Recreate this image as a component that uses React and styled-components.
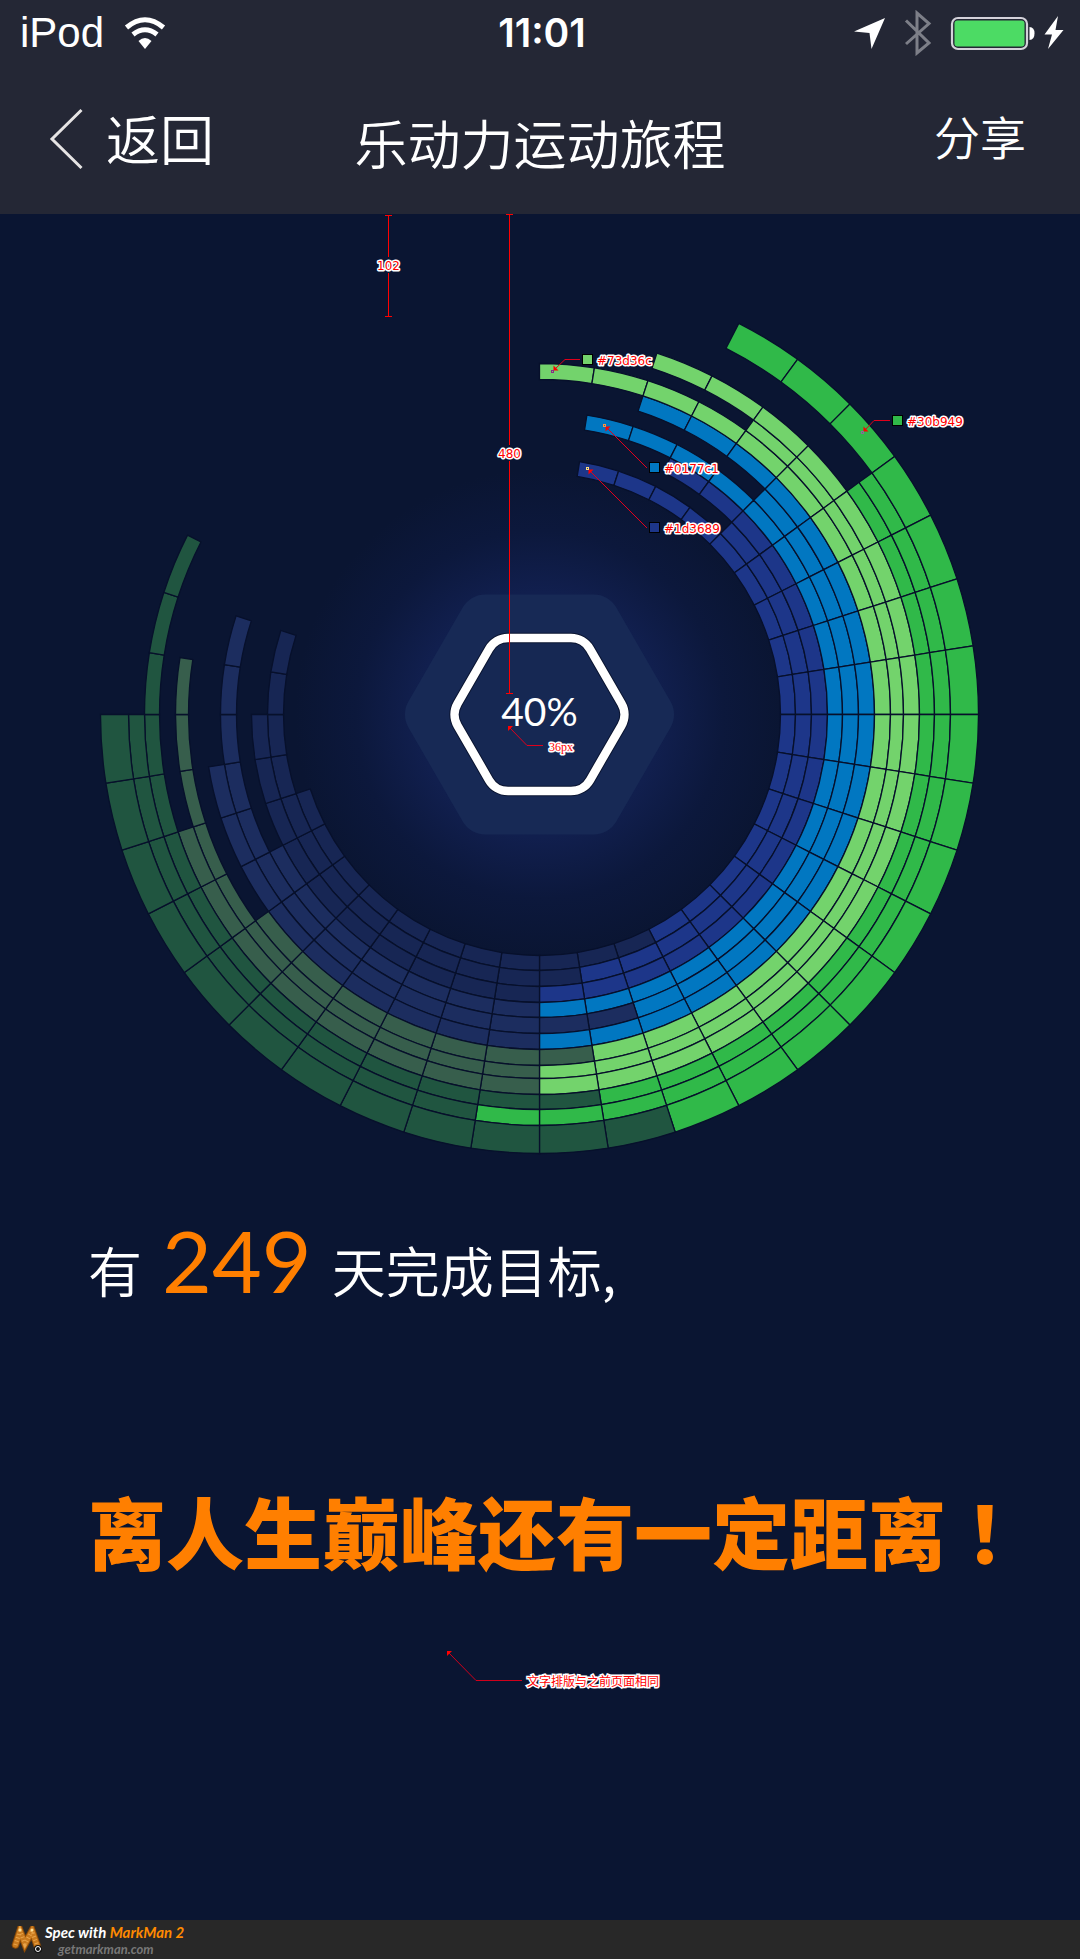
import React from "react";
import styled, { createGlobalStyle } from "styled-components";

const CJK = '"Noto Sans CJK SC", sans-serif';

const GlobalStyle = createGlobalStyle`
  *, *::before, *::after { box-sizing: border-box; }
  body {
    margin: 0;
    background: #0a1532;
    color: #fff;
    font-family: "Liberation Sans", ${CJK};
  }
`;

const Page = styled.div`
  display: flex;
  flex-direction: column;
  min-height: 100vh;
`;

const Header = styled.header`
  background: #242735;
`;

const StatusBar = styled.div`
  display: grid;
  grid-template-columns: 1fr auto 1fr;
  align-items: center;
  height: 64px;
  padding: 2px 16px 0 20px;
`;

const StatusGroup = styled.div`
  display: flex;
  align-items: center;
  justify-content: ${(p) => (p.$end ? "flex-end" : "flex-start")};
  gap: 20px;
`;

const Device = styled.span`
  font-size: 42px;
  line-height: 48px;
`;

const Clock = styled.time`
  font: 600 39px/48px Inter, sans-serif;
`;

const NavBar = styled.nav`
  display: grid;
  grid-template-columns: 1fr auto 1fr;
  align-items: center;
  height: 150px;
  padding: 0 54px 2px;
`;

const NavButton = styled.button`
  display: flex;
  align-items: center;
  gap: 20px;
  justify-self: ${(p) => (p.$end ? "end" : "start")};
  padding: 0 0 ${(p) => (p.$end ? 6 : 0)}px;
  border: 0;
  background: none;
  color: #fff;
  font: 350 ${(p) => (p.$end ? 46 : 54)}px/72px ${CJK};
  cursor: pointer;

  svg {
    overflow: visible;
  }
`;

const Title = styled.h1`
  margin: 0;
  padding-top: 8px;
  font: 350 53px/72px ${CJK};
`;

const Main = styled.main`
  flex: 1;
`;

const Chart = styled.svg`
  display: block;
  width: 100%;
  height: auto;
`;

const Percent = styled.text`
  fill: #fff;
  font: 400 39px Lato, sans-serif;
`;

const Note = styled.text`
  fill: #f00;
  stroke: #fff;
  stroke-width: 3px;
  stroke-linejoin: round;
  paint-order: stroke;
  font: 12px ${(p) => (p.$serif ? '"Liberation Serif", serif' : '"DejaVu Sans", sans-serif')};
`;

const Summary = styled.section`
  padding: 6px 72px 0 88px;
`;

const Goal = styled.p`
  display: flex;
  align-items: baseline;
  gap: 20px;
  margin: 0;
  font: 350 54px/120px ${CJK};
`;

const Days = styled.strong`
  color: #ff7f00;
  font: 400 86px/120px Lato, sans-serif;
`;

const Verdict = styled.h2`
  margin: 140px 0 0;
  color: #ff7f00;
  font: 900 78px/120px ${CJK};
  white-space: nowrap;
`;

// The Traditional Chinese face centres full-width punctuation in its box.
const Exclamation = styled.span`
  font-family: "Noto Sans CJK TC", ${CJK};
`;

const Remark = styled.p`
  display: flex;
  align-items: flex-end;
  gap: 4px;
  margin: 60px 0 0 358px;
  color: #f00;
  font: 12px/16px ${CJK};
  paint-order: stroke;
  -webkit-text-stroke: 3px #fff;
`;

const Footer = styled.footer`
  display: flex;
  align-items: center;
  gap: 2px;
  height: 39px;
  padding-left: 11px;
  background: #282828;
`;

const Credit = styled.a`
  display: block;
  color: #fff;
  font: italic 700 15px/18px Lato, sans-serif;
  text-decoration: none;
`;

const Product = styled.span`
  color: #ff8a00;
`;

const Site = styled.span`
  display: block;
  padding-left: 13px;
  color: #777;
  font-size: 13px;
  line-height: 16px;
`;

const CX = 539.5;
const CY = 500.5;
const RADII = [241, 256, 272, 288, 303, 319, 335, 351, 364, 380, 395, 411, 439];
const LIT = ["#1d3689", "#0177c1", "#73d36c", "#30b949"];
const DIM = ["#172654", "#1c2d5f", "#375e4c", "#205540"];

// One entry per ring, inside out: first lit step, last lit step, last dimmed step.
const RINGS = [
  [1, 17, 28], [5, 19, 32], [3, 20, 30],
  [1, 20, 27], [5, 18, 32], [2, 20, 29],
  [0, 19, 26], [4, 20, 31], [2, 20, 28],
  [6, 19, 33], [6, 21, 30], [3, 18, 30],
];

const point = (r, step) => {
  const a = (step * 9 * Math.PI) / 180;
  return `${(CX + r * Math.sin(a)).toFixed(2)},${(CY - r * Math.cos(a)).toFixed(2)}`;
};

const cell = (inner, outer, step) =>
  `M${point(inner, step)} L${point(outer, step)} A${outer},${outer} 0 0 1 ${point(outer, step + 1)} ` +
  `L${point(inner, step + 1)} A${inner},${inner} 0 0 0 ${point(inner, step)}Z`;

const hexagon = (apothem, radius) => {
  const cut = radius / Math.sqrt(3);
  const R = (apothem * 2) / Math.sqrt(3);
  const vertex = (i) => [
    CX + R * Math.cos((i * Math.PI) / 3),
    CY + R * Math.sin((i * Math.PI) / 3),
  ];
  let d = "";
  for (let i = 0; i < 6; i += 1) {
    const v = vertex(i);
    const toward = (w) => [
      v[0] + ((w[0] - v[0]) * cut) / R,
      v[1] + ((w[1] - v[1]) * cut) / R,
    ];
    const a = toward(vertex(i - 1));
    const b = toward(vertex(i + 1));
    d += `${i ? "L" : "M"}${a} A${radius},${radius} 0 0 1 ${b} `;
  }
  return `${d}Z`;
};

function Rings() {
  return (
    <g stroke="#07102b" strokeWidth="1.3">
      {RINGS.map(([from, lit, end], ring) =>
        Array.from({ length: end - from }, (_, i) => from + i).map((step) => (
          <path
            key={`${ring}-${step}`}
            d={cell(RADII[ring], RADII[ring + 1], step)}
            fill={(step < lit ? LIT : DIM)[Math.floor(ring / 3)]}
          />
        ))
      )}
    </g>
  );
}

function Measure({ x, top, bottom, gap, label }) {
  return (
    <g>
      <path
        d={`M${x - 3.5},${top}h7M${x},${top}V${gap}M${x},${gap + 16}V${bottom}M${x - 3.5},${bottom}h7`}
        stroke="#f00"
        fill="none"
      />
      <Note x={x} y={gap + 13} textAnchor="middle">{label}</Note>
    </g>
  );
}

function Arrow({ x, y, flip }) {
  return <path d={flip ? `M${x},${y}v-5l5,5z` : `M${x},${y}h5l-5,5z`} fill="#f00" />;
}

function Swatch({ x, y, color, dot, dotColor, line, flip }) {
  return (
    <g>
      <path d={line} stroke="#e0001b" fill="none" />
      <Arrow x={dot[0] + 1} y={flip ? dot[1] - 1 : dot[1] + 1} flip={flip} />
      <rect x={dot[0] - 1} y={dot[1] - 1} width="2" height="2" fill="none" stroke={dotColor} />
      <rect x={x} y={y} width="10" height="10" fill={color} stroke="#000" />
      <Note x={x + 14.5} y={y + 10}>{color}</Note>
    </g>
  );
}

function JourneyChart() {
  return (
    <Chart viewBox="0 0 1080 980" role="img" aria-label="40%">
      <defs>
        <radialGradient id="glow">
          <stop offset="0" stopColor="#13235a" />
          <stop offset="0.5" stopColor="#111f4e" />
          <stop offset="0.75" stopColor="#0c183c" />
          <stop offset="1" stopColor="#0a1532" />
        </radialGradient>
      </defs>
      <circle cx={CX} cy={CY} r="245" fill="url(#glow)" />
      <Rings />
      <path d={hexagon(120, 26)} fill="#172955" />
      <path d={hexagon(76.5, 22)} fill="#162853" stroke="#0a1430" strokeWidth="10.5" />
      <path d={hexagon(76.5, 22)} fill="none" stroke="#fff" strokeWidth="8.5" />
      <Percent x={CX} y="512" textAnchor="middle">40%</Percent>

      <Measure x={388.5} top={1.5} bottom={102.5} gap={43} label="102" />
      <Measure x={509.5} top={0.5} bottom={479.5} gap={231} label="480" />
      <Swatch x={582.5} y={140.5} color="#73d36c" dot={[552.5, 157.5]} dotColor="#8a2a8a" line="M555,155L565,145.500H580" flip />
      <Swatch x={649.5} y={248.5} color="#0177c1" dot={[604.5, 211.5]} dotColor="#ff9040" line="M606,213L647,254" />
      <Swatch x={649.5} y={308.5} color="#1d3689" dot={[587.5, 254.5]} dotColor="#ffe080" line="M589,256L647,314" />
      <Swatch x={892.5} y={201.5} color="#30b949" dot={[862.5, 218.5]} dotColor="#8a6a9a" line="M865,216L874,206.500H890" flip />
      <path d="M509,513L527,531.500H543" stroke="#e0001b" fill="none" />
      <Arrow x={508} y={512} />
      <Note $serif x="549" y="537">36px</Note>
    </Chart>
  );
}

function WifiIcon() {
  return (
    <svg width="42" height="32" viewBox="0 0 42 32" fill="none" stroke="#fff" strokeWidth="5" aria-hidden="true">
      <path d="M2.500,10.500Q21,-5 39.500,10.500" />
      <path d="M9,17.500Q21,8 33,17.500" />
      <path d="M21,32L14.500,24Q21,18 27.500,24Z" fill="#fff" stroke="none" />
    </svg>
  );
}

function StatusIcons() {
  return (
    <svg width="211" height="46" viewBox="0 0 211 46" fill="none" aria-hidden="true">
      <path d="M32,8L1,21.500L16.500,23L18.500,39Z" fill="#fff" />
      <path d="M53,10.500L76,33L64,43V3L76,13.500L53,34" stroke="#7d7f88" strokeWidth="3" />
      <rect x="99" y="8" width="75" height="31" rx="6" stroke="#d4d2da" strokeWidth="2.200" />
      <rect x="101.500" y="10.500" width="70" height="26" rx="3" fill="#4cdb64" />
      <path d="M176.500,17Q181.500,17 181.500,23.500Q181.500,30 176.500,30Z" fill="#fff" />
      <path d="M205,6L191.500,24.500H199L195,39L210.500,20H202.500Z" fill="#fff" />
    </svg>
  );
}

function BackIcon() {
  return (
    <svg width="32" height="64" viewBox="5 0 32 64" fill="none" stroke="#e6e4e4" strokeWidth="3" aria-hidden="true">
      <path d="M32.500,4L3,33L32.500,62" />
    </svg>
  );
}

function MarkManLogo() {
  return (
    <svg width="32" height="28" viewBox="0 0 32 28" fill="none" strokeLinecap="round" aria-hidden="true">
      <path d="M4.500,19L9,5L14,18L21,5L27,22" stroke="#8a4a08" strokeWidth="7.500" />
      <path d="M4.500,19L9,5L14,18L21,5L27,22" stroke="#c97a1e" strokeWidth="5.500" />
      <path d="M4.500,19L9,5L14,18L21,5L27,22" stroke="#e8a34a" strokeWidth="4" strokeDasharray="1 2.500" strokeLinecap="butt" />
      <circle cx="9" cy="4" r="1.500" fill="#ffe39a" />
      <circle cx="21" cy="4" r="1.500" fill="#ffe39a" />
      <circle cx="27" cy="23" r="4" fill="#111" />
      <circle cx="27" cy="23" r="2.500" stroke="#fff" />
    </svg>
  );
}

export default function App() {
  return (
    <Page>
      <GlobalStyle />
      <Header>
        <StatusBar>
          <StatusGroup>
            <Device>iPod</Device>
            <WifiIcon />
          </StatusGroup>
          <Clock>11:01</Clock>
          <StatusGroup $end>
            <StatusIcons />
          </StatusGroup>
        </StatusBar>
        <NavBar>
          <NavButton type="button">
            <BackIcon />
            返回
          </NavButton>
          <Title>乐动力运动旅程</Title>
          <NavButton type="button" $end>分享</NavButton>
        </NavBar>
      </Header>
      <Main>
        <JourneyChart />
        <Summary>
          <Goal>
            <span>有</span>
            <Days>249</Days>
            <span>天完成目标,</span>
          </Goal>
          <Verdict>
            离人生巅峰还有一定距离<Exclamation>！</Exclamation>
          </Verdict>
          <Remark>
            <svg width="77" height="39" viewBox="0 0 77 39" fill="none" aria-hidden="true">
              <path d="M2,2L30,30.500H76" stroke="#d0001b" />
              <path d="M1,1h5l-5,5z" fill="#f00" />
            </svg>
            <span>文字排版与之前页面相同</span>
          </Remark>
        </Summary>
      </Main>
      <Footer>
        <MarkManLogo />
        <Credit href="#markman">
          Spec with <Product>MarkMan 2</Product>
          <Site>getmarkman.com</Site>
        </Credit>
      </Footer>
    </Page>
  );
}
